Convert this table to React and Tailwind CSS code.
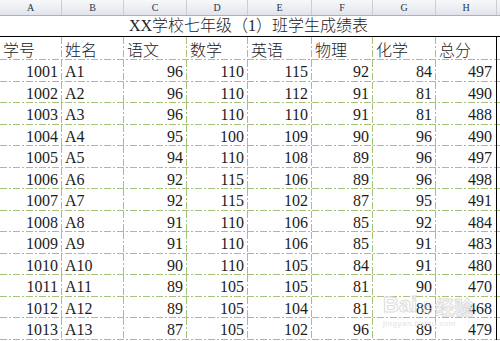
import React from "react";

const widths = ["w-[62px]", "w-[62px]", "w-[63px]", "w-[61px]", "w-[64px]", "w-[61px]", "w-[63px]", "w-[61px]"];
const letters = ["A", "B", "C", "D", "E", "F", "G", "H"];
const heads = ["学号", "姓名", "语文", "数学", "英语", "物理", "化学", "总分"];
const data = [
  [1001, "A1", 96, 110, 115, 92, 84, 497],
  [1002, "A2", 96, 110, 112, 91, 81, 490],
  [1003, "A3", 96, 110, 110, 91, 81, 488],
  [1004, "A4", 95, 100, 109, 90, 96, 490],
  [1005, "A5", 94, 110, 108, 89, 96, 497],
  [1006, "A6", 92, 115, 106, 89, 96, 498],
  [1007, "A7", 92, 115, 102, 87, 95, 491],
  [1008, "A8", 91, 110, 106, 85, 92, 484],
  [1009, "A9", 91, 110, 106, 85, 91, 483],
  [1010, "A10", 90, 110, 105, 84, 91, 480],
  [1011, "A11", 89, 105, 105, 81, 90, 470],
  [1012, "A12", 89, 105, 104, 81, 89, 468],
  [1013, "A13", 87, 105, 102, 96, 89, 479],
];

const hLine =
  "bg-[repeating-linear-gradient(90deg,#a6c27b_0_7px,transparent_7px_9px,#a6c27b_9px_11px,transparent_11px_13px)] bg-no-repeat bg-bottom bg-[length:100%_1px]";
const vLine =
  "bg-[repeating-linear-gradient(180deg,#a6c27b_0_7px,transparent_7px_9px,#a6c27b_9px_11px,transparent_11px_13px)] bg-no-repeat bg-right bg-[length:1px_100%]";

function Cell({ i, children, align }) {
  const last = i === 7;
  return (
    <div
      className={`${widths[i]} shrink-0 h-full flex items-center ${
        align === "right" ? "justify-end pr-[4px]" : "justify-start pl-[3px]"
      } ${last ? "border-r border-black" : vLine}`}
    >
      {children}
    </div>
  );
}

export default function App() {
  return (
    <div className="relative w-[500px] h-[341px] overflow-hidden bg-white text-[#1c1c1c] font-['Liberation_Serif','Noto_Sans_CJK_SC',serif]">
      {/* column letters */}
      <div className="flex h-[16px] border-b border-[#aab2bd] bg-[linear-gradient(#f7f8fa,#e1e5eb)]">
        {letters.map((l, i) => (
          <div
            key={l}
            className={`${widths[i]} shrink-0 flex items-center justify-center border-r border-[#c9ced6] text-[10px] leading-none text-[#27364a]`}
          >
            {l}
          </div>
        ))}
        <div className="flex-1" />
      </div>

      {/* title row */}
      <div className="flex h-[21px] border-b border-black">
        <div className="w-[497px] shrink-0 flex items-center justify-center text-[16px] leading-none font-light text-[#222]">
          XX学校七年级（1）班学生成绩表
        </div>
      </div>

      {/* header row */}
      <div className={`flex h-[23px] ${hLine}`}>
        {heads.map((h, i) => (
          <Cell key={h} i={i}>
            <span className="text-[16px] leading-none font-['Noto_Sans_CJK_SC',sans-serif] font-light text-[#222]">
              {h}
            </span>
          </Cell>
        ))}
      </div>

      {/* data rows */}
      {data.map((row, r) => (
        <div
          key={row[0]}
          className={`flex ${r % 2 === 0 ? "h-[22px]" : "h-[21px]"} ${hLine}`}
        >
          {row.map((v, i) => (
            <Cell key={i} i={i} align={i === 1 ? "left" : "right"}>
              <span className="text-[16px] leading-none pt-[2px]">{v}</span>
            </Cell>
          ))}
        </div>
      ))}

      {/* watermark */}
      <div className="absolute left-[383px] top-[294px] flex flex-col items-start pointer-events-none select-none">
        <div className="flex items-end gap-[2px]">
          <span className="text-[22px] leading-none font-bold font-['Liberation_Sans',sans-serif] text-transparent [-webkit-text-stroke:1px_#dcdcdc]">
            Bai
          </span>
          <span className="text-[14px] leading-none text-[#e2e2e2]">❀</span>
          <span className="text-[19px] leading-none font-['Noto_Sans_CJK_SC',sans-serif] font-bold text-transparent [-webkit-text-stroke:1px_#dcdcdc]">
            经验
          </span>
        </div>
        <span className="mt-[4px] text-[8px] leading-none font-['Liberation_Sans',sans-serif] text-[#e3e3e3] tracking-[0.5px]">
          jingyan.baidu.com
        </span>
      </div>
    </div>
  );
}
